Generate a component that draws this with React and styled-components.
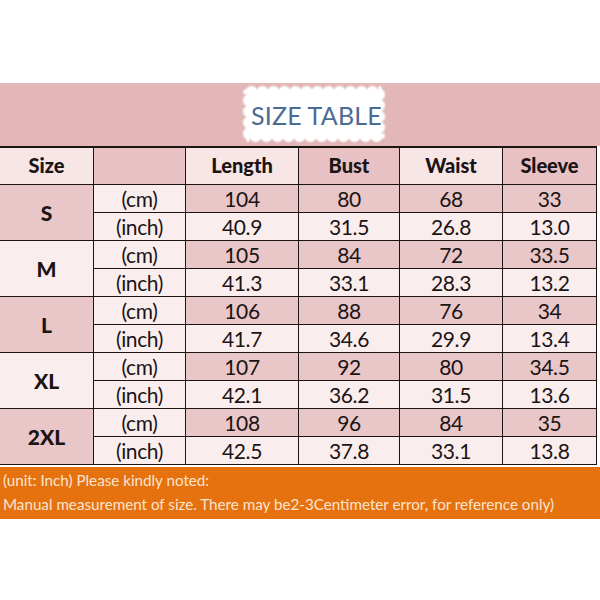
import React from 'react'
import styled, { createGlobalStyle } from 'styled-components'

const GlobalStyle = createGlobalStyle`
  body {
    margin: 0;
    background: #fff;
    font-family: Lato, "Liberation Sans", sans-serif;
  }
`

const columns = ['Length', 'Bust', 'Waist', 'Sleeve']

const sizes = [
  { name: 'S', cm: ['104', '80', '68', '33'], inch: ['40.9', '31.5', '26.8', '13.0'] },
  { name: 'M', cm: ['105', '84', '72', '33.5'], inch: ['41.3', '33.1', '28.3', '13.2'] },
  { name: 'L', cm: ['106', '88', '76', '34'], inch: ['41.7', '34.6', '29.9', '13.4'] },
  { name: 'XL', cm: ['107', '92', '80', '34.5'], inch: ['42.1', '36.2', '31.5', '13.6'] },
  { name: '2XL', cm: ['108', '96', '84', '35'], inch: ['42.5', '37.8', '33.1', '13.8'] },
]

// scalloped edge for the title badge
const scallopPath = (w, h, step) => {
  let d = `M 6 6`
  for (let x = 6; x < w - 6; x += step) {
    const nx = Math.min(x + step, w - 6)
    d += ` Q ${(x + nx) / 2} 0 ${nx} 6`
  }
  for (let y = 6; y < h - 6; y += step) {
    const ny = Math.min(y + step, h - 6)
    d += ` Q ${w} ${(y + ny) / 2} ${w - 6} ${ny}`
  }
  for (let x = w - 6; x > 6; x -= step) {
    const nx = Math.max(x - step, 6)
    d += ` Q ${(x + nx) / 2} ${h} ${nx} ${h - 6}`
  }
  for (let y = h - 6; y > 6; y -= step) {
    const ny = Math.max(y - step, 6)
    d += ` Q 0 ${(y + ny) / 2} 6 ${ny}`
  }
  return d + ' Z'
}

const App = () => {
  return (
    <Page>
      <GlobalStyle />
      <Banner>
        <Badge>
          <BadgeShape width="148" height="62" viewBox="0 0 148 62">
            <path d={scallopPath(148, 62, 11)} fill="#fff" stroke="#f1dede" strokeWidth="1.5" />
          </BadgeShape>
          <BadgeText>SIZE TABLE</BadgeText>
        </Badge>
      </Banner>
      <Table>
        <HeadCell $dark={false}>Size</HeadCell>
        <HeadCell $dark />
        {columns.map((c, i) => (
          <HeadCell key={c} $dark={i % 2 === 1}>{c}</HeadCell>
        ))}
        {sizes.map((s, gi) => (
          <React.Fragment key={s.name}>
            <SizeCell $dark={gi % 2 === 0}>{s.name}</SizeCell>
            <Cell>(cm)</Cell>
            {s.cm.map((v, i) => (
              <Cell key={'cm' + i} $dark>{v}</Cell>
            ))}
            <Cell>(inch)</Cell>
            {s.inch.map((v, i) => (
              <Cell key={'in' + i}>{v}</Cell>
            ))}
          </React.Fragment>
        ))}
      </Table>
      <Note>
        <NoteLine>(unit: Inch) Please kindly noted:</NoteLine>
        <NoteLine>Manual measurement of size. There may be2-3Centimeter error, for reference only)</NoteLine>
      </Note>
    </Page>
  )
}

export default App

const Page = styled.div`
  width: 600px;
  height: 600px;
  padding-top: 83px;
  box-sizing: border-box;
  background: #fff;
`

const Banner = styled.div`
  height: 63px;
  background: #e3b7b8;
  display: flex;
  align-items: flex-start;
  padding-left: 240px;
`

const Badge = styled.div`
  position: relative;
  width: 148px;
  height: 61px;
  display: flex;
  align-items: center;
  justify-content: flex-end;
  padding-right: 6px;
  box-sizing: border-box;
`

const BadgeShape = styled.svg`
  position: absolute;
  top: 0;
  left: 0;
`

const BadgeText = styled.span`
  position: relative;
  font-size: 25px;
  color: #4c6b92;
  letter-spacing: 0.2px;
  padding-top: 2px;
`

const Table = styled.div`
  width: 597px;
  display: grid;
  grid-template-columns: 94px 92px 113px 101px 103px 94px;
  grid-template-rows: 37px repeat(10, 28px);
  border-top: 2px solid #1d1414;
`

const Cell = styled.div`
  display: flex;
  align-items: center;
  justify-content: center;
  box-sizing: border-box;
  border-right: 1px solid #1d1414;
  border-bottom: 1px solid #1d1414;
  background: ${p => (p.$dark ? '#e9c6c7' : '#faeded')};
  color: #1a1414;
  font-size: 21px;
  letter-spacing: -0.4px;
`

const HeadCell = styled(Cell)`
  font-weight: 900;
  font-size: 20px;
  letter-spacing: 0;
  padding-bottom: 2px;
  background: ${p => (p.$dark ? '#e7c1c3' : '#f8e5e5')};
`

const SizeCell = styled(Cell)`
  grid-row: span 2;
  font-weight: 900;
  font-size: 21px;
  letter-spacing: 0;
`

const Note = styled.div`
  margin-top: 2px;
  height: 52px;
  background: #e5720f;
  padding: 1px 0 0 3px;
  box-sizing: border-box;
  display: flex;
  flex-direction: column;
`

const NoteLine = styled.div`
  height: 24px;
  line-height: 24px;
  font-size: 15.2px;
  color: #fbe4cf;
  white-space: nowrap;
`
